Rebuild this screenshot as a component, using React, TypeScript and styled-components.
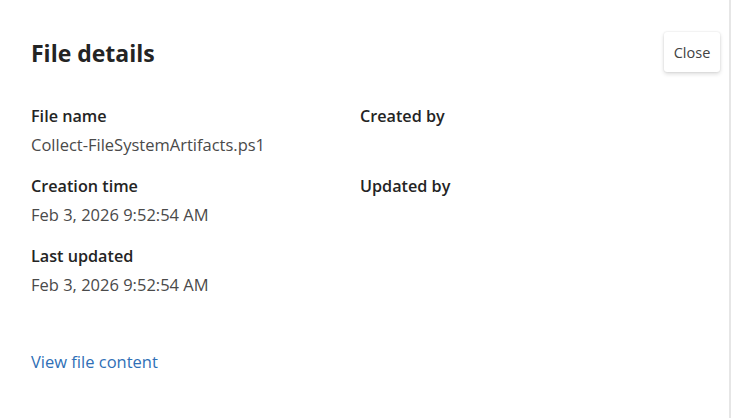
import React from "react";
import styled, { createGlobalStyle } from "styled-components";

const Global = createGlobalStyle`
  html, body { margin: 0; padding: 0; background: #fff; }
  body { font-family: "Open Sans", "Noto Sans", sans-serif; color: #242424; }
`;

const Panel = styled.div`
  position: relative;
  width: 731px;
  height: 418px;
  border-right: 2px solid #e6e6e6;
  background: #fff;
  padding: 36px 31px 0 31px;
  box-sizing: border-box;
  display: flex;
  flex-direction: column;
`;

const Title = styled.h1`
  margin: 0;
  font-size: 23px;
  font-weight: 700;
  line-height: 34px;
  color: #242424;
`;

const Grid = styled.div`
  margin-top: 35px;
  display: grid;
  grid-template-columns: 329px 1fr;
  row-gap: 6px;
`;

const Field = styled.div`
  display: flex;
  flex-direction: column;
  height: 64px;
`;

const Label = styled.div`
  font-size: 16.2px;
  font-weight: 600;
  line-height: 22px;
  color: #242424;
`;

const Value = styled.div`
  margin-top: 7px;
  font-size: 16.5px;
  line-height: 22px;
  color: #4a4a4a;
`;

const Link = styled.a`
  margin-top: 42px;
  align-self: flex-start;
  font-size: 16.5px;
  line-height: 22px;
  color: #2f6fb6;
  text-decoration: none;
  cursor: pointer;
`;

const CloseButton = styled.button`
  position: absolute;
  top: 32px;
  right: 9px;
  width: 56px;
  height: 40px;
  padding: 0;
  border: none;
  border-radius: 3px;
  background: #fff;
  box-shadow: 0 0 2px rgba(0,0,0,0.12), 0 2px 4px rgba(0,0,0,0.14);
  font-family: "Open Sans", "Noto Sans", sans-serif;
  font-size: 14.5px;
  color: #424242;
  cursor: pointer;
`;

const fields: Array<[string, string]> = [
  ["File name", "Collect-FileSystemArtifacts.ps1"],
  ["Created by", ""],
  ["Creation time", "Feb 3, 2026 9:52:54 AM"],
  ["Updated by", ""],
  ["Last updated", "Feb 3, 2026 9:52:54 AM"],
];

export default function App() {
  return (
    <>
      <Global />
      <Panel>
        <Title>File details</Title>
        <Grid>
          {fields.map((f, i) => (
            <Field key={i}>
              <Label>{f[0]}</Label>
              {f[1] && <Value>{f[1]}</Value>}
            </Field>
          ))}
        </Grid>
        <Link>View file content</Link>
        <CloseButton>Close</CloseButton>
      </Panel>
    </>
  );
}
